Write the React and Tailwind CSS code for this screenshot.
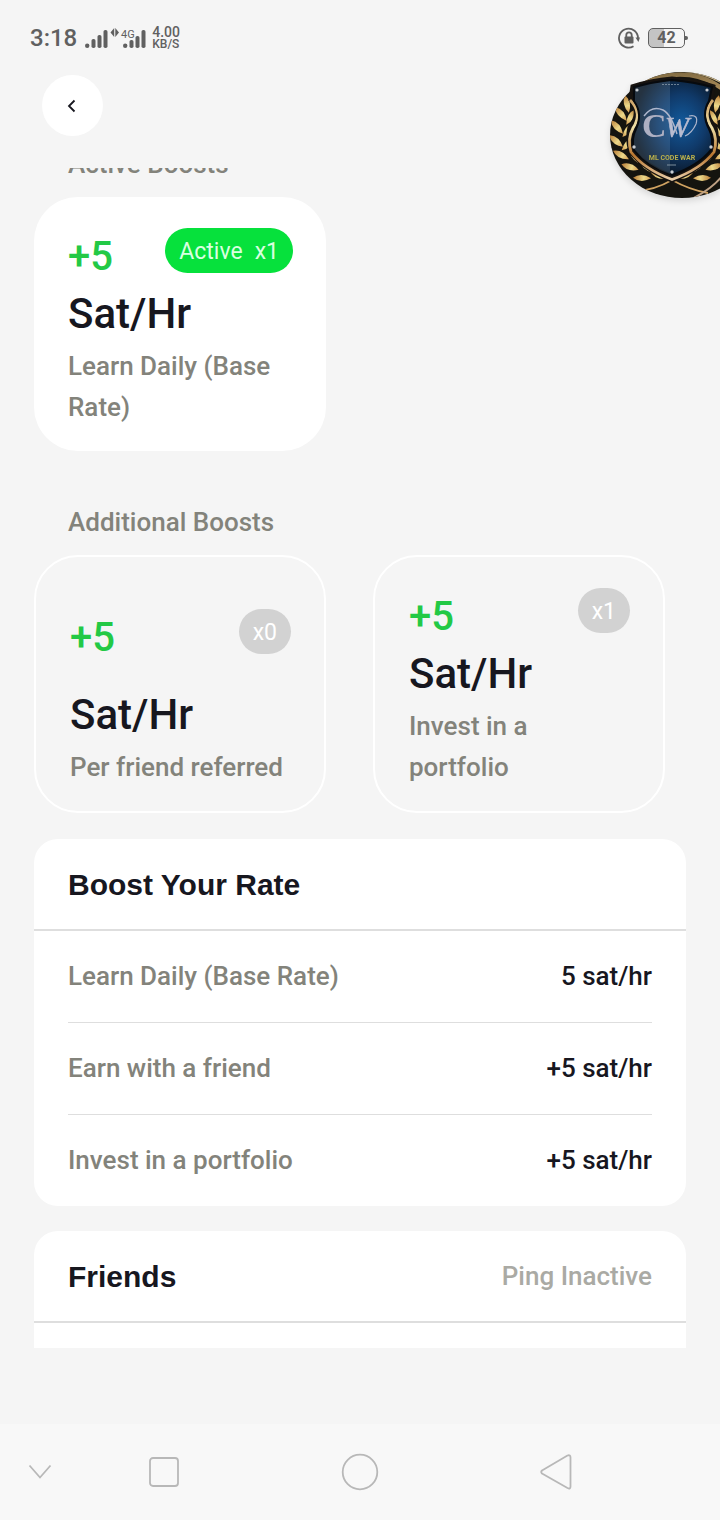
import React from "react";

const rates = [
  { label: "Learn Daily (Base Rate)", value: "5 sat/hr" },
  { label: "Earn with a friend", value: "+5 sat/hr" },
  { label: "Invest in a portfolio", value: "+5 sat/hr" },
];

function SignalIcons() {
  return (
    <svg width="61" height="24" viewBox="0 0 61 24" fill="#606060" aria-hidden="true">
      <circle cx="2.2" cy="19.8" r="2.2" />
      <rect x="6.5" y="13" width="4" height="9" rx="1.8" />
      <rect x="12.5" y="9" width="4" height="13" rx="1.8" />
      <rect x="18.5" y="4" width="4" height="18" rx="1.8" />
      <path d="M25.5 6.500 29.200 2v9zM34 6.500 30.300 2v9z" />
      <text x="36" y="12" fontSize="11" fontFamily="Roboto, sans-serif">4G</text>
      <circle cx="40.2" cy="19.8" r="2.2" />
      <rect x="44.5" y="14" width="4" height="8" rx="1.8" />
      <rect x="50.5" y="10" width="4" height="12" rx="1.8" />
      <rect x="56.5" y="4" width="4" height="18" rx="1.8" />
    </svg>
  );
}

function StatusBar() {
  return (
    <div className="flex h-[75px] items-center justify-between pl-[30px] pr-8 text-[#606060]">
      <div className="flex items-center gap-2">
        <span className="text-2xl font-medium">3:18</span>
        <div className="flex items-center gap-1.5">
          <SignalIcons />
          <div className="text-xs font-medium leading-3">
            <div className="text-sm leading-3">4.00</div>
            <div>KB/S</div>
          </div>
        </div>
      </div>
      <div className="flex items-center gap-2">
        <svg width="22" height="22" viewBox="0 0 22 22" fill="none" aria-hidden="true">
          <path d="M15.500 19.200A9.500 9.500 0 1 1 20 11" stroke="#606060" strokeWidth="1.8" />
          <path d="M17.500 10.500h4.500l-1.600 4.500z" fill="#606060" />
          <rect x="6.500" y="9.500" width="9" height="7" rx="1" fill="#606060" />
          <path d="M8.300 10V8a2.700 2.700 0 0 1 5.400 0v2" stroke="#606060" strokeWidth="1.8" />
        </svg>
        <div className="flex items-center">
          <div className="flex h-5 w-[37px] items-center justify-center rounded-[5px] border border-[#606060] bg-linear-to-r from-[#c4c4c4] from-42% to-transparent to-42% text-base font-bold">
            42
          </div>
          <div className="h-1 w-[3px] rounded-r-sm bg-[#606060]" />
        </div>
      </div>
    </div>
  );
}

const leaves = [
  [17, 33, 78], [11, 43, 50], [21, 46, 122], [7, 56, 48], [18, 59, 128],
  [6, 70, 40], [18, 73, 135], [11, 84, 28], [24, 84, 62], [20, 96, 18], [36, 95, 46], [32, 107, 2], [48, 104, 26],
];

function ClanBadge() {
  return (
    <svg width="110" height="132" viewBox="0 0 110 132" className="drop-shadow-md" role="img" aria-label="ML Code War">
      <defs>
        <radialGradient id="shield" cx="0.62" cy="0.45" r="0.6">
          <stop offset="0" stopColor="#125a9c" />
          <stop offset="0.5" stopColor="#103a6a" />
          <stop offset="1" stopColor="#0a1420" />
        </radialGradient>
        <linearGradient id="gold" gradientUnits="userSpaceOnUse" x1="0" y1="0" x2="0" y2="112">
          <stop offset="0" stopColor="#7d6840" />
          <stop offset="0.3" stopColor="#d6ad70" />
          <stop offset="0.5" stopColor="#efe0a8" />
          <stop offset="0.75" stopColor="#b9762f" />
          <stop offset="1" stopColor="#f0d9b8" />
        </linearGradient>
        <linearGradient id="leaf" gradientUnits="userSpaceOnUse" x1="-9" y1="0" x2="9" y2="0">
          <stop offset="0" stopColor="#b87a35" />
          <stop offset="0.6" stopColor="#ecd98a" />
          <stop offset="1" stopColor="#d49a50" />
        </linearGradient>
        <clipPath id="disc">
          <ellipse cx="72" cy="64" rx="72" ry="63" />
        </clipPath>
      </defs>
      <ellipse cx="72" cy="64" rx="72" ry="63" fill="#15140f" />
      <g clipPath="url(#disc)">
        <path d="M20 15Q52 1 80 4Q106 8 126 30" fill="none" stroke="url(#gold)" strokeWidth="4.500" />
        <path d="M60 0Q92-2 122 18" fill="none" stroke="#c9b488" strokeWidth="1.500" />
        <g fill="url(#leaf)">
          {leaves.map(([x, y, a]) => (
            <g key={`${x}-${y}`}>
              <path d="M-9 0Q-1-6 9 0Q-1 6-9 0Z" transform={`translate(${x} ${y}) rotate(${a})`} />
              <path d="M-9 0Q-1-6 9 0Q-1 6-9 0Z" transform={`translate(${124 - x} ${y}) rotate(${180 - a})`} />
            </g>
          ))}
        </g>
        <path d="M62 109Q45 119 26 120M62 109Q80 119 98 122" fill="none" stroke="#d0a261" strokeWidth="1.800" />
        <path d="M84 127Q104 116 112 105" fill="none" stroke="#bda084" strokeWidth="2" />
      </g>
      <path
        d="M22 15Q40 9 62 7Q86 9 104 15L102 29Q93 42 106 56Q109 68 105 81Q91 99 62 110Q34 99 20 81Q16 68 19 56Q31 42 20 29Z"
        fill="#171310"
        stroke="#171310"
        strokeWidth="3"
      />
      <path
        d="M20 29Q33 42 23 57Q17 68 21 81Q34 98 62 108.500Q91 98 104 81Q108 68 102 57Q92 42 103 29"
        fill="none"
        stroke="url(#gold)"
        strokeWidth="2.800"
      />
      <path
        d="M24 16Q42 11 62 9Q84 11 102 16L99 30Q91 43 99 58Q104 68 101 79Q88 95 62 104Q37 95 24 79Q21 68 26 58Q33 43 24 30Z"
        fill="url(#shield)"
        stroke="#070a0e"
        strokeWidth="2"
      />
      <path d="M25 17Q42 12 60 10V103Q37 95 25 79Q22 68 27 58Q34 43 25 30Z" fill="#8fb0c8" opacity="0.2" />
      <path d="M52 13.500H70" stroke="#a9b8c4" strokeWidth="1.200" strokeDasharray="2 1" opacity="0.6" />
      <text x="32" y="66" fontSize="34" fontWeight="700" fontFamily="Liberation Serif, serif" fill="#aeb0c2">C</text>
      <text x="55" y="66" fontSize="29" fontStyle="italic" fontFamily="Liberation Serif, serif" fill="#b9bcd0" stroke="#b9bcd0" strokeWidth="0.6">W</text>
      <path d="M34 45Q42 34 53 39Q61 43 67 63" fill="none" stroke="#aeb6cc" strokeWidth="1.400" />
      <path d="M79 45Q89 43 86 53Q82 62 75 65" fill="none" stroke="#aeb6cc" strokeWidth="1.200" />
      <text x="62" y="89" textAnchor="middle" fontSize="7" fontWeight="700" fontFamily="Roboto, sans-serif" fill="#b9b04c">
        ML CODE WAR
      </text>
      <path d="M57 94h9" stroke="#9aa9b4" strokeWidth="0.8" />
      <g fill="#c9cdd2">
        <circle cx="27" cy="19" r="1.6" />
        <circle cx="97" cy="19" r="1.6" />
        <circle cx="24" cy="76" r="1.7" />
        <circle cx="101" cy="76" r="1.7" />
        <circle cx="62" cy="101" r="1.7" />
      </g>
    </svg>
  );
}

function BoostCard({ badge, children, active }) {
  return (
    <article
      className={
        active
          ? "flex flex-col rounded-[44px] bg-white pt-[31px] pr-[33px] pb-[23px] pl-[34px]"
          : "flex flex-col rounded-[44px] border-2 border-white pt-[31px] pr-[33px] pb-[23px] pl-[34px]"
      }
    >
      <div className="flex flex-1 items-center">
        <div className="flex flex-1 items-start justify-between">
          <span className="text-[40px] leading-[57px] font-medium text-[#23c945]">+5</span>
          <span
            className={
              active
                ? "flex h-[45px] items-center gap-3 rounded-full bg-[#06e13c] px-3.5 pt-1 text-[23px] text-[#d9ffe0]"
                : "flex h-[45px] items-center rounded-full bg-[#d2d2d2] px-3.5 pt-1 text-[23px] text-white"
            }
          >
            {badge.map((part) => (
              <span key={part}>{part}</span>
            ))}
          </span>
        </div>
      </div>
      <h3 className="text-[42px] leading-[57px] font-medium text-[#17171f]">Sat/Hr</h3>
      <p className="mt-1 text-[26px] leading-[41px] font-medium text-[#83837b]">{children}</p>
    </article>
  );
}

function PanelHeader({ title, children }) {
  return (
    <header className="flex items-center justify-between border-b-2 border-[#dedede] px-[34px] pt-[25px] pb-6 leading-[41px]">
      <h2 className="font-['Liberation_Sans',sans-serif] text-[30px] font-bold text-[#17171f]">{title}</h2>
      {children}
    </header>
  );
}

export default function App() {
  return (
    <div className="relative flex h-screen flex-col overflow-hidden bg-[#f5f5f5] font-[Roboto,sans-serif]">
      <StatusBar />
      <div className="px-[42px] pb-8">
        <button type="button" aria-label="Back" className="flex size-[61px] items-center justify-center rounded-full bg-white">
          <svg width="12" height="14" viewBox="0 0 12 14" fill="none" className="mr-0.5" aria-hidden="true">
            <path d="M8.500 1.500 3 7l5.500 5.500" stroke="#17171f" strokeWidth="1.8" />
          </svg>
        </button>
      </div>
      <div className="absolute top-[71px] right-0">
        <ClanBadge />
      </div>

      <main className="min-h-0 flex-1 overflow-hidden">
        <section className="pr-[55px] pl-[34px]">
          <h2 className="-mt-6 px-[34px] pb-3 text-[26px] leading-[41px] font-medium text-[#83837b]">Active Boosts</h2>
          <div className="grid grid-cols-2 gap-[47px]">
            <BoostCard active badge={["Active", "x1"]}>Learn Daily (Base Rate)</BoostCard>
          </div>
        </section>

        <section className="mt-[51px] pr-[55px] pl-[34px]">
          <h2 className="px-[34px] pb-3 text-[26px] leading-[41px] font-medium text-[#83837b]">Additional Boosts</h2>
          <div className="grid grid-cols-2 gap-[47px]">
            <BoostCard badge={["x0"]}>Per friend referred</BoostCard>
            <BoostCard badge={["x1"]}>Invest in a portfolio</BoostCard>
          </div>
        </section>

        <div className="mt-[26px] flex flex-col gap-[25px] px-[34px]">
          <section className="rounded-3xl bg-white">
            <PanelHeader title="Boost Your Rate" />
            <div className="px-[34px]">
              <table className="w-full text-[26px] leading-[41px] font-medium">
                <tbody className="divide-y divide-[#dedede]">
                  {rates.map((rate) => (
                    <tr key={rate.label}>
                      <th scope="row" className="py-[25px] text-left font-medium text-[#83837b]">{rate.label}</th>
                      <td className="py-[25px] text-right text-[#17171f]">{rate.value}</td>
                    </tr>
                  ))}
                </tbody>
              </table>
            </div>
          </section>

          <section className="min-h-80 rounded-3xl bg-white">
            <PanelHeader title="Friends">
              <button type="button" className="text-[26px] font-medium text-[#aaaaa4]">Ping Inactive</button>
            </PanelHeader>
          </section>
        </div>
      </main>

      <div className="h-[76px] shrink-0" />
      <nav className="grid h-24 shrink-0 grid-cols-[66px_1fr_1fr_1fr_66px] items-center justify-items-center bg-[#f8f8f8]">
        <button type="button" aria-label="Hide navigation" className="ml-3.5">
          <svg width="24" height="16" viewBox="0 0 24 16" fill="none" stroke="#b8b8b8" strokeWidth="1.8" aria-hidden="true">
            <path d="M1.500 1.500 12 13.500 22.500 1.500" />
          </svg>
        </button>
        <button type="button" aria-label="Recent apps">
          <svg width="30" height="30" viewBox="0 0 30 30" fill="none" stroke="#b8b8b8" strokeWidth="1.8" aria-hidden="true">
            <rect x="1" y="1" width="28" height="28" rx="3" />
          </svg>
        </button>
        <button type="button" aria-label="Home">
          <svg width="38" height="38" viewBox="0 0 38 38" fill="none" stroke="#b8b8b8" strokeWidth="1.8" aria-hidden="true">
            <circle cx="19" cy="19" r="17.300" />
          </svg>
        </button>
        <button type="button" aria-label="Back">
          <svg width="32" height="36" viewBox="0 0 32 36" fill="none" stroke="#b8b8b8" strokeWidth="1.8" strokeLinejoin="round" aria-hidden="true">
            <path d="M2 16.500 27.500 1.500Q30.500 0.500 30.500 3.500V32.500Q30.500 35.500 27.500 34L2 19.500Q0.500 18 2 16.500Z" />
          </svg>
        </button>
      </nav>
    </div>
  );
}
